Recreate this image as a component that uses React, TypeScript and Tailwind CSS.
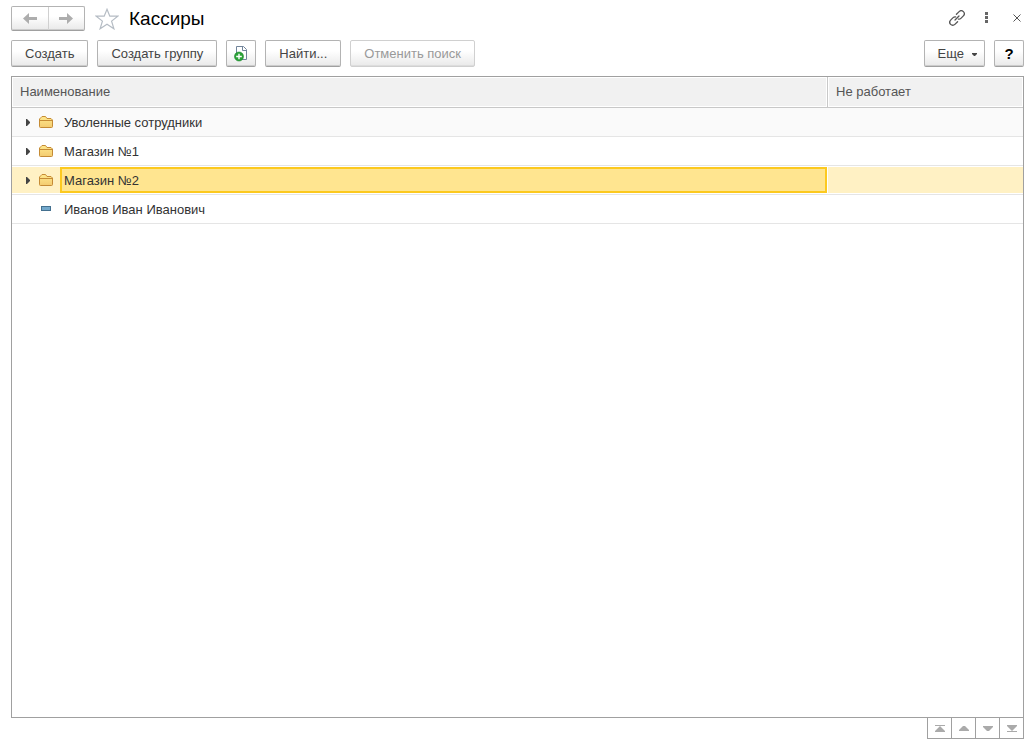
import type { ButtonHTMLAttributes, ReactNode } from 'react';

const BUTTON =
  'flex items-center justify-center rounded-xs border bg-linear-to-b from-white from-40% to-[#e9e9e9]';

type ToolButtonProps = ButtonHTMLAttributes<HTMLButtonElement> & {
  square?: boolean;
  children: ReactNode;
};

function ToolButton({ square, children, ...rest }: ToolButtonProps) {
  return (
    <button
      type="button"
      className={`${BUTTON} h-[27px] shrink-0 whitespace-nowrap border-[#b3b3b3] border-b-[#a0a0a0] pt-px text-[#444444] shadow-[inset_0_-1px_0_#cccccc] disabled:border-[#d0d0d0] disabled:text-[#999999] disabled:shadow-[inset_0_-1px_0_#dddddd] ${
        square ? 'w-[30px]' : 'px-[13px]'
      }`}
      {...rest}
    >
      {children}
    </button>
  );
}

function ArrowIcon({ right }: { right?: boolean }) {
  return (
    <svg width="14" height="11" viewBox="0 0 14 11" fill="#adadad" aria-hidden="true">
      {right ? (
        <path d="M0 4H8V0L14 5.5L8 11V7H0Z" />
      ) : (
        <path d="M14 4H6V0L0 5.5L6 11V7H14Z" />
      )}
    </svg>
  );
}

function StarIcon() {
  return (
    <svg width="24" height="22" viewBox="0 0 24 22" fill="none" stroke="#b5bcc4" strokeWidth="1.2" aria-hidden="true">
      <path d="M12 1.3L14.8 8.2H22.8L16.6 13.1L18.9 20.8L12 16.3L5.1 20.8L7.4 13.1L1.2 8.2H9.2Z" />
    </svg>
  );
}

function LinkIcon() {
  return (
    <svg width="16" height="16" viewBox="0 0 16 16" fill="none" stroke="#555555" strokeWidth="1.3" strokeLinecap="round" aria-hidden="true">
      <g transform="rotate(-45 8 8)">
        <path d="M5.8 11H2A3 3 0 0 1 2 5H5.5Q7 5 7.8 6.2" />
        <path d="M10.2 5H14A3 3 0 0 1 14 11H10.5Q9 11 8.2 9.8" />
        <path d="M5.2 8H10.8" />
      </g>
    </svg>
  );
}

function CopyIcon() {
  return (
    <svg width="14" height="16" viewBox="0 0 14 16" aria-hidden="true">
      <path d="M2.5 .5H9.5L12.5 3.5V13.5H2.5Z" fill="#ffffff" stroke="#71849a" />
      <path d="M8.5 .5V4.5H12.5" fill="none" stroke="#71849a" />
      <circle cx="5" cy="10.5" r="4.5" fill="#2ba237" stroke="#16852a" strokeWidth=".6" />
      <path d="M5 7.7V13.3M2.2 10.5H7.8" stroke="#ffffff" strokeWidth="1.4" />
    </svg>
  );
}

function FolderIcon() {
  return (
    <svg width="14" height="12" viewBox="0 0 14 12" aria-hidden="true">
      <defs>
        <linearGradient id="folder-fill" x1="0" y1="0" x2="0" y2="1">
          <stop offset="0" stopColor="#ffe98e" />
          <stop offset="1" stopColor="#f3cb70" />
        </linearGradient>
      </defs>
      <path
        d="M.5 10.5V3L2 1.5L3 .5H6.5L8 2.5H12L13.5 4V10.5Q13.5 11.5 12.5 11.5H1.5Q.5 11.5 .5 10.5Z"
        fill="url(#folder-fill)"
        stroke="#c58b35"
      />
      <path d="M1 4.5H13" stroke="#c58b35" />
    </svg>
  );
}

function ItemIcon() {
  return (
    <svg width="10" height="5" viewBox="0 0 10 5" aria-hidden="true">
      <rect x=".5" y=".5" width="9" height="4" fill="#73a9cc" stroke="#44708f" />
    </svg>
  );
}

type Row = { name: string; folder: boolean; tinted?: boolean; selected?: boolean };

const ROWS: Row[] = [
  { name: 'Уволенные сотрудники', folder: true, tinted: true },
  { name: 'Магазин №1', folder: true },
  { name: 'Магазин №2', folder: true, selected: true },
  { name: 'Иванов Иван Иванович', folder: false },
];

function TreeRow({ row }: { row: Row }) {
  const fill = row.selected ? 'bg-[#fff1c4]' : '';
  return (
    <tr className={row.tinted ? 'bg-[#fafafa]' : ''} aria-selected={!!row.selected}>
      <td className="border-b border-[#e5e5e5] p-0">
        <div className="flex h-7 py-px">
          <div className={`flex w-12 shrink-0 items-center ${fill}`}>
            {row.folder ? (
              <button type="button" aria-label="Развернуть" className="flex h-full w-[27px] items-center pl-[14px]">
                <svg width="4" height="7" viewBox="0 0 4 7" fill="#444444" aria-hidden="true">
                  <path d="M0 0H1L4 3V4L1 7H0Z" />
                </svg>
              </button>
            ) : (
              <span className="w-[27px]" />
            )}
            <span className={row.folder ? '' : 'flex h-full items-start pl-0.5 pt-[10px]'}>
              {row.folder ? <FolderIcon /> : <ItemIcon />}
            </span>
          </div>
          <div
            className={`mr-px flex flex-1 items-center border-2 pt-0.5 pl-0.5 text-[#333333] ${
              row.selected ? 'border-[#fcc91f] bg-[#ffe590]' : 'border-transparent'
            }`}
          >
            {row.name}
          </div>
        </div>
      </td>
      <td className="border-b border-[#e5e5e5] p-0">
        <div className="flex h-7 py-px">
          <div className={`flex-1 ${fill}`} />
        </div>
      </td>
    </tr>
  );
}

const PAGERS = [
  { label: 'В начало', path: 'M0 0H10V1H0ZM5 1L10 6V7H0V6Z' },
  { label: 'Вверх', path: 'M4 1H6L10 5V6H0V5Z' },
  { label: 'Вниз', path: 'M0 1H10V2L6 6H4L0 2Z' },
  { label: 'В конец', path: 'M0 0H10V1L5 6L0 1ZM0 6H10V7H0Z' },
];

export default function App() {
  return (
    <main className="flex h-screen flex-col bg-white pt-[6px] pr-0.5 pb-[5px] pl-[11px] font-['Liberation_Sans',Arial,sans-serif] text-[13px] leading-4">
      <header className="flex h-[25px] items-center">
        <div className={`${BUTTON} h-[25px] w-[74px] border-[#b3b3b3] border-b-[#a0a0a0] shadow-[inset_0_-1px_0_#cccccc]`}>
          <button type="button" aria-label="Назад" className="flex h-full flex-1 items-center justify-center border-r border-[#d0d0d0]">
            <ArrowIcon />
          </button>
          <button type="button" aria-label="Вперед" className="flex h-full flex-1 items-center justify-center">
            <ArrowIcon right />
          </button>
        </div>
        <button type="button" aria-label="В избранное" className="ml-[10px]">
          <StarIcon />
        </button>
        <h1 className="ml-[10px] flex-1 text-[19px] leading-6 text-black">Кассиры</h1>
        <div className="flex items-center pr-[3px] pb-[2px]">
          <button type="button" aria-label="Ссылка">
            <LinkIcon />
          </button>
          <button type="button" aria-label="Меню" className="ml-5">
            <svg width="3" height="11" viewBox="0 0 3 11" fill="#666666" aria-hidden="true">
              <path d="M0 0H3V3H0ZM0 4H3V7H0ZM0 8H3V11H0Z" />
            </svg>
          </button>
          <button type="button" aria-label="Закрыть" className="ml-[25px]">
            <svg width="8" height="8" viewBox="0 0 8 8" stroke="#555555" aria-hidden="true">
              <path d="M.5 .5L7.5 7.5M7.5 .5L.5 7.5" />
            </svg>
          </button>
        </div>
      </header>

      <div className="mt-[9px] flex gap-[9px]">
        <ToolButton>Создать</ToolButton>
        <ToolButton>Создать группу</ToolButton>
        <ToolButton square aria-label="Скопировать">
          <CopyIcon />
        </ToolButton>
        <ToolButton>Найти...</ToolButton>
        <ToolButton disabled>Отменить поиск</ToolButton>
        <div className="flex-1" />
        <ToolButton>
          Еще
          <svg className="ml-2 -mr-1.5" width="5" height="3" viewBox="0 0 5 3" fill="#444444" aria-hidden="true">
            <path d="M0 0H5V1L3 3H2L0 1Z" />
          </svg>
        </ToolButton>
        <ToolButton square aria-label="Справка">
          <span className="text-[15px] font-bold text-black">?</span>
        </ToolButton>
      </div>

      <div className="mt-[9px] flex-1 border border-[#a0a0a0]">
        <table className="w-full table-fixed border-separate border-spacing-0">
          <colgroup>
            <col />
            <col className="w-[195px]" />
          </colgroup>
          <thead>
            <tr className="text-left text-[#555555]">
              <th className="border-r border-b border-[#c8c8c8] p-px font-normal">
                <div className="flex h-7 items-center bg-[#f1f1f1] pl-[7px]">Наименование</div>
              </th>
              <th className="border-b border-[#c8c8c8] p-px font-normal">
                <div className="flex h-7 items-center bg-[#f1f1f1] pl-[7px]">Не работает</div>
              </th>
            </tr>
          </thead>
          <tbody>
            {ROWS.map((row) => (
              <TreeRow key={row.name} row={row} />
            ))}
          </tbody>
        </table>
      </div>

      <nav aria-label="Прокрутка" className="flex self-end border-l border-[#a0a0a0]">
        {PAGERS.map((pager) => (
          <button
            key={pager.label}
            type="button"
            aria-label={pager.label}
            className="flex h-[21px] w-6 items-center justify-center border-r border-b border-[#a0a0a0]"
          >
            <svg width="10" height="7" viewBox="0 0 10 7" fill="#aaaaaa" aria-hidden="true">
              <path d={pager.path} />
            </svg>
          </button>
        ))}
      </nav>
    </main>
  );
}
